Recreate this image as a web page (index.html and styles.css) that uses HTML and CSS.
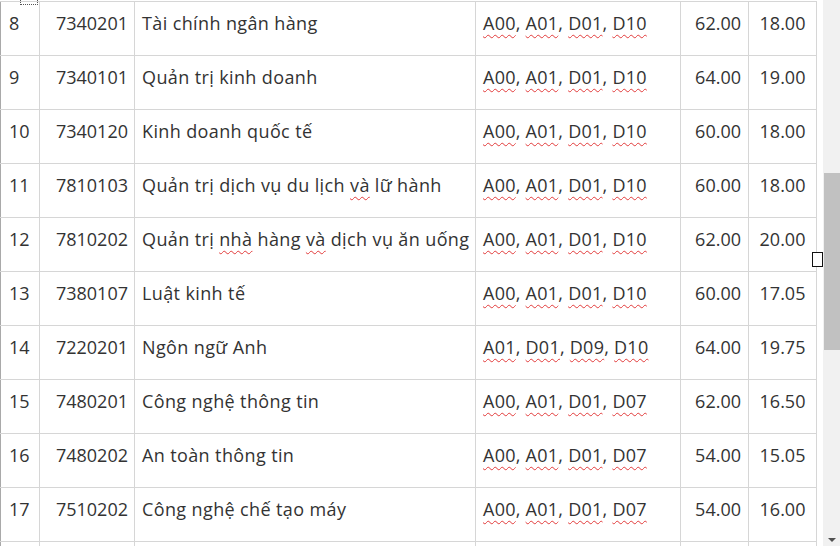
FILE: index.html
```html
<!DOCTYPE html>
<html lang="vi">
<head>
<meta charset="utf-8">
<title>Bảng ngành</title>
<link rel="stylesheet" href="styles.css">
</head>
<body>
<div class="editor">
  <span class="img-handle"></span>
  <span class="resize-handle"></span>
  <table class="grid">
    <colgroup>
      <col class="c-stt"><col class="c-code"><col class="c-name"><col class="c-combo"><col class="c-quota"><col class="c-score">
    </colgroup>
    <tbody>
      <tr><td class="stt">8</td><td class="code">7340201</td><td class="name">Tài chính ngân hàng</td><td class="combo"><span class="sp">A00</span>, <span class="sp">A01</span>, <span class="sp">D01</span>, <span class="sp">D10</span></td><td class="num">62.00</td><td class="score">18.00</td></tr>
      <tr><td class="stt">9</td><td class="code">7340101</td><td class="name">Quản trị kinh doanh</td><td class="combo"><span class="sp">A00</span>, <span class="sp">A01</span>, <span class="sp">D01</span>, <span class="sp">D10</span></td><td class="num">64.00</td><td class="score">19.00</td></tr>
      <tr><td class="stt">10</td><td class="code">7340120</td><td class="name">Kinh doanh quốc tế</td><td class="combo"><span class="sp">A00</span>, <span class="sp">A01</span>, <span class="sp">D01</span>, <span class="sp">D10</span></td><td class="num">60.00</td><td class="score">18.00</td></tr>
      <tr><td class="stt">11</td><td class="code">7810103</td><td class="name">Quản trị dịch vụ du lịch <span class="sp">và</span> lữ hành</td><td class="combo"><span class="sp">A00</span>, <span class="sp">A01</span>, <span class="sp">D01</span>, <span class="sp">D10</span></td><td class="num">60.00</td><td class="score">18.00</td></tr>
      <tr><td class="stt">12</td><td class="code">7810202</td><td class="name">Quản trị <span class="sp">nhà</span> hàng <span class="sp">và</span> dịch vụ ăn uống</td><td class="combo"><span class="sp">A00</span>, <span class="sp">A01</span>, <span class="sp">D01</span>, <span class="sp">D10</span></td><td class="num">62.00</td><td class="score">20.00</td></tr>
      <tr><td class="stt">13</td><td class="code">7380107</td><td class="name">Luật kinh tế</td><td class="combo"><span class="sp">A00</span>, <span class="sp">A01</span>, <span class="sp">D01</span>, <span class="sp">D10</span></td><td class="num">60.00</td><td class="score">17.05</td></tr>
      <tr><td class="stt">14</td><td class="code">7220201</td><td class="name">Ngôn ngữ Anh</td><td class="combo"><span class="sp">A01</span>, <span class="sp">D01</span>, <span class="sp">D09</span>, <span class="sp">D10</span></td><td class="num">64.00</td><td class="score">19.75</td></tr>
      <tr><td class="stt">15</td><td class="code">7480201</td><td class="name">Công nghệ thông tin</td><td class="combo"><span class="sp">A00</span>, <span class="sp">A01</span>, <span class="sp">D01</span>, <span class="sp">D07</span></td><td class="num">62.00</td><td class="score">16.50</td></tr>
      <tr><td class="stt">16</td><td class="code">7480202</td><td class="name">An toàn thông tin</td><td class="combo"><span class="sp">A00</span>, <span class="sp">A01</span>, <span class="sp">D01</span>, <span class="sp">D07</span></td><td class="num">54.00</td><td class="score">15.05</td></tr>
      <tr><td class="stt">17</td><td class="code">7510202</td><td class="name">Công nghệ chế tạo máy</td><td class="combo"><span class="sp">A00</span>, <span class="sp">A01</span>, <span class="sp">D01</span>, <span class="sp">D07</span></td><td class="num">54.00</td><td class="score">16.00</td></tr>
      <tr><td></td><td></td><td></td><td></td><td></td><td></td></tr>
    </tbody>
  </table>
</div>
<div class="scrollbar">
  <div class="thumb"></div>
  <div class="arrow"></div>
</div>
</body>
</html>
```

FILE: styles.css
```css
html, body {
  margin: 0;
  padding: 0;
  background: #ffffff;
}
body {
  display: flex;
  height: 546px;
  overflow: hidden;
  font-family: "Open Sans", "Lato", sans-serif;
  color: #333333;
}
.editor {
  position: relative;
  flex: 0 0 823px;
  height: 546px;
  overflow: hidden;
  padding-top: 1px;
  box-sizing: border-box;
}
.grid {
  border-collapse: collapse;
  table-layout: fixed;
  width: 817px;
  font-size: 18px;
}
.c-stt { width: 39px; }
.c-code { width: 95px; }
.c-name { width: 341px; }
.c-combo { width: 205px; }
.c-quota { width: 68px; }
.c-score { width: 68px; }
.grid td {
  border: 1px solid #d6d6d6;
  height: 54px;
  box-sizing: border-box;
  padding: 7px 7px 0 7px;
  vertical-align: top;
  line-height: 28px;
  white-space: nowrap;
  overflow: hidden;
}
.grid td:first-child {
  border-left-color: #a9a9a9;
}
.grid td.stt { padding-left: 8px; padding-right: 0; }
.grid td.code { text-align: right; padding-right: 6px; padding-left: 0; }
.grid td.name { letter-spacing: 0.38px; }
.grid td.combo { letter-spacing: 0.25px; }
.grid td.num { text-align: right; padding-right: 7px; }
.grid td.score { text-align: center; padding-left: 2px; padding-right: 2px; }
.sp {
  text-decoration: underline wavy #e23b3b;
  text-decoration-thickness: 1px;
  text-underline-offset: 4px;
  text-decoration-skip-ink: none;
}
.img-handle {
  position: absolute;
  left: 20px;
  top: -3px;
  width: 16px;
  height: 6px;
  border: 1px dotted #555;
}
.resize-handle {
  position: absolute;
  left: 812px;
  top: 252px;
  width: 9px;
  height: 13px;
  background: #fff;
  border: 1px solid #111;
}
.scrollbar {
  flex: 0 0 17px;
  height: 546px;
  background: #f1f1f1;
  display: flex;
  flex-direction: column;
  align-items: flex-end;
}
.thumb {
  margin-top: 173px;
  width: 16px;
  height: 177px;
  background: #c1c1c1;
}
.arrow {
  margin-top: auto;
  margin-bottom: 4px;
  margin-right: 4px;
  width: 0;
  height: 0;
  border-left: 4px solid transparent;
  border-right: 4px solid transparent;
  border-top: 4px solid #505050;
}
```
